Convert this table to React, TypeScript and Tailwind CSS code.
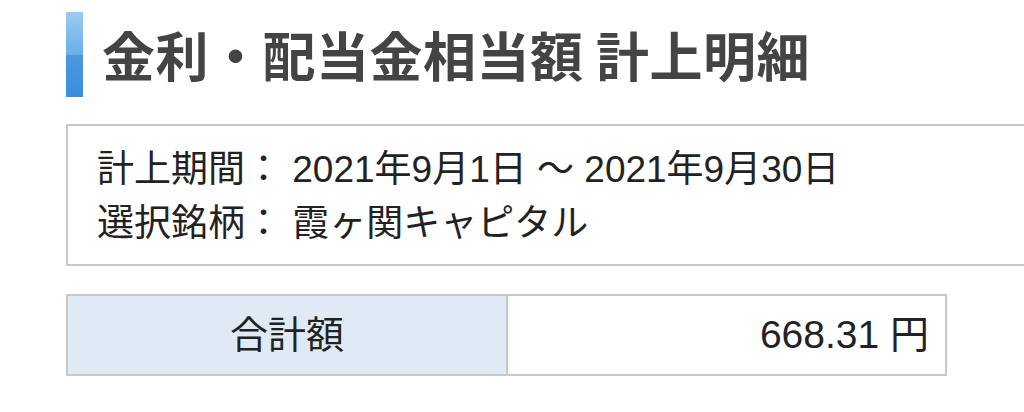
export default function App() {
  return (
    <div
      className="w-[1024px] h-[412px] bg-white overflow-hidden text-[#222]"
      style={{ fontFamily: '"Liberation Sans", "Noto Sans CJK JP", sans-serif' }}
    >
      <div className="pl-[66px] pt-[12px] flex items-center">
        <div className="w-[17px] h-[85px] flex flex-col">
          <div className="flex-1 bg-gradient-to-b from-[#9ccbf2] to-[#6aaee8]" />
          <div className="flex-1 bg-gradient-to-b from-[#4a9ae0] to-[#3c8ddb]" />
        </div>
        <h1
          className="ml-[19px] text-[53px] font-bold text-[#444] leading-none tracking-[0.5px]"
          style={{ fontFamily: '"Noto Sans CJK JP", sans-serif' }}
        >
          金利・配当金相当額 計上明細
        </h1>
      </div>
      <div className="ml-[66px] mt-[27px] w-[1000px] h-[142px] border-2 border-r-0 border-[#c8c8c8] pl-[29px] pt-[17px] text-[37px] leading-[54px]">
        <div>計上期間： 2021年9月1日 ～ 2021年9月30日</div>
        <div>選択銘柄： 霞ヶ関キャピタル</div>
      </div>
      <div className="ml-[66px] mt-[28px] w-[881px] h-[82px] border-2 border-[#c8c8c8] flex">
        <div className="w-[440px] bg-[#e0eaf4] border-r-2 border-[#c8c8c8] flex items-center justify-center text-[38px]">
          合計額
        </div>
        <div className="flex-1 flex items-center justify-end pr-[16px] text-[39px]">668.31 円</div>
      </div>
    </div>
  );
}
